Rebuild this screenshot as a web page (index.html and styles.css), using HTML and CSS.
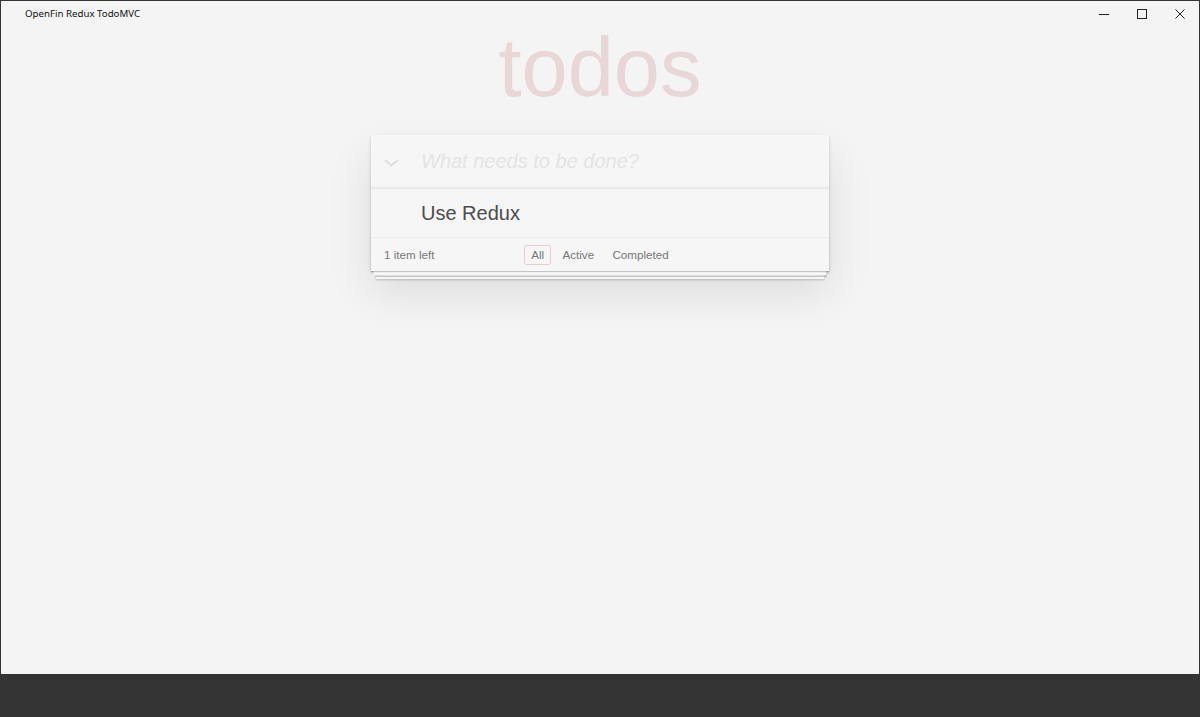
FILE: index.html
```html
<!DOCTYPE html>
<html lang="en">
<head>
<meta charset="utf-8">
<title>OpenFin Redux TodoMVC</title>
<link rel="stylesheet" href="styles.css">
</head>
<body>
<div class="window">
  <div class="titlebar">
    <span class="title">OpenFin Redux TodoMVC</span>
    <div class="controls">
      <span class="ctl"><svg width="10" height="10" viewBox="0 0 10 10"><line x1="0" y1="5.5" x2="10" y2="5.5" stroke="#222" stroke-width="1"/></svg></span>
      <span class="ctl"><svg width="10" height="10" viewBox="0 0 10 10"><rect x="0.5" y="0.5" width="9" height="9" fill="none" stroke="#222" stroke-width="1"/></svg></span>
      <span class="ctl"><svg width="10" height="10" viewBox="0 0 10 10"><path d="M0.5 0.5 L9.5 9.5 M9.5 0.5 L0.5 9.5" stroke="#222" stroke-width="1"/></svg></span>
    </div>
  </div>
  <div class="content">
    <h1 class="heading">todos</h1>
    <section class="todoapp">
      <div class="new-todo">
        <span class="toggle-all"><svg width="15" height="8" viewBox="0 0 15 8"><polyline points="1,1 7.5,6.5 14,1" fill="none" stroke="#dedede" stroke-width="2"/></svg></span>
        <span class="placeholder">What needs to be done?</span>
      </div>
      <ul class="todo-list">
        <li class="todo">Use Redux</li>
      </ul>
      <footer class="footer">
        <span class="todo-count">1 item left</span>
        <ul class="filters">
          <li><a class="filter selected">All</a></li>
          <li><a class="filter">Active</a></li>
          <li><a class="filter">Completed</a></li>
        </ul>
      </footer>
    </section>
  </div>
</div>
</body>
</html>
```
FILE: styles.css
```css
html, body {
  margin: 0;
  height: 100%;
}

body {
  background: #333333;
  font-family: "Liberation Sans", Arial, Helvetica, sans-serif;
}

.window {
  box-sizing: border-box;
  height: 674px;
  border: 1px solid #333333;
  border-bottom: 0;
  background: #f4f4f4;
  display: flex;
  flex-direction: column;
}

.titlebar {
  height: 25px;
  display: flex;
  align-items: center;
  padding-left: 24px;
}

.title {
  font-family: "Noto Sans", "Open Sans", sans-serif;
  font-size: 9.7px;
  color: #111;
}

.controls {
  margin-left: auto;
  display: flex;
  align-self: stretch;
}

.ctl {
  width: 38px;
  display: flex;
  align-items: center;
  justify-content: center;
}

.content {
  flex: 1;
}

.heading {
  margin: 0;
  font-size: 83px;
  line-height: 83px;
  font-weight: 100;
  text-align: center;
  color: rgba(175, 47, 47, 0.15);
}

.todoapp {
  width: 458px;
  margin: 26px auto 0;
  background: #f6f6f6;
  position: relative;
  box-shadow: 0 2px 3px 0 rgba(0, 0, 0, 0.2), 0 21px 42px 0 rgba(0, 0, 0, 0.1);
}

.new-todo {
  position: relative;
  height: 53px;
  padding-left: 50px;
  display: flex;
  align-items: center;
  border-bottom: 1px solid #e6e6e6;
  box-shadow: inset 0 -2px 1px rgba(0, 0, 0, 0.03);
}

.toggle-all {
  position: absolute;
  left: 13px;
  top: 24px;
  display: flex;
}

.placeholder {
  font-size: 20px;
  font-style: italic;
  color: #e4e4e4;
}

.todo-list {
  list-style: none;
  margin: 0;
  padding: 0;
}

.todo {
  height: 48px;
  padding-left: 50px;
  display: flex;
  align-items: center;
  font-size: 20px;
  color: #4d4d4d;
  border-bottom: 1px solid #ededed;
}

.footer {
  position: relative;
  height: 33px;
  padding: 0 13px;
  display: flex;
  align-items: center;
  color: #777777;
  font-size: 11.67px;
}

.footer::before {
  content: "";
  position: absolute;
  left: 0;
  right: 0;
  bottom: 0;
  height: 41.7px;
  overflow: hidden;
  box-shadow: 0 1px 1px rgba(0, 0, 0, 0.2),
              0 7px 0 -2.5px #f6f6f6,
              0 8px 1px -2.5px rgba(0, 0, 0, 0.2),
              0 13px 0 -5px #f6f6f6,
              0 14px 2px -5px rgba(0, 0, 0, 0.2);
}

.todo-count {
  position: relative;
}

.filters {
  position: absolute;
  left: 0;
  right: 0;
  margin: 0;
  padding: 0;
  list-style: none;
  text-align: center;
}

.filters li {
  display: inline;
}

.filter {
  display: inline-block;
  margin: 0 0.5px;
  padding: 2.5px 6px;
  border: 1px solid transparent;
  border-radius: 2.5px;
  color: inherit;
}

.filter.selected {
  border-color: rgba(175, 47, 47, 0.2);
}
```
